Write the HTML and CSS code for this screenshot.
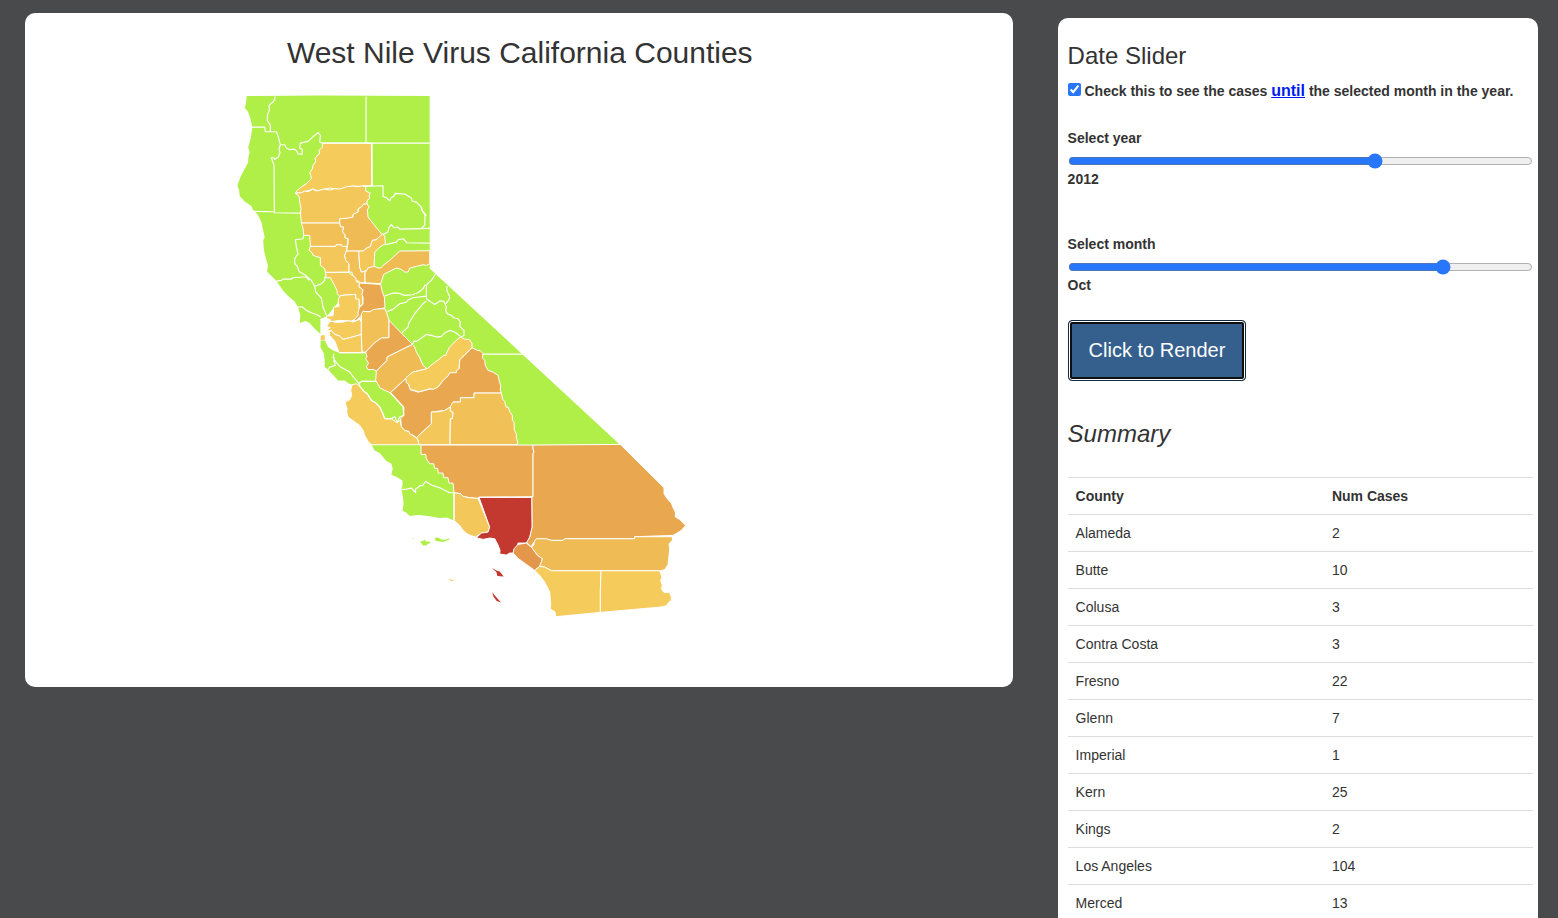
FILE: index.html
```html
<!DOCTYPE html>
<html lang="en">
<head>
<meta charset="utf-8">
<title>West Nile Virus California Counties</title>
<link rel="stylesheet" href="styles.css">
</head>
<body>
<main class="layout">
<section class="map-panel">
<h2 class="map-title">West Nile Virus California Counties</h2>
<svg class="map" viewBox="25.3 84.6 988 560" width="988" height="560" role="img" aria-label="California counties">
<path class="g0" d="M247 95.7L290 95.4L320 95.2L430 95.7V268L620 444L421 445H454.3V520L447 517.2L440 517.7L428.3 515.7L419 514.6L410 515.7L407 512.5L402.7 510L403.9 504L403.3 496.7L401.7 489.3L402.9 484L402.7 480L397 476.5L391.7 474.3L393 468L391.7 463.3L386.7 460.7L380 452.7L375 450L372.3 445L400 430L385 417L356 385L349.3 383.3L345 380H338.3L333 374L328.3 369L325 366.7V360L324.3 353.3L320.7 346.7L321 340H325.3L328.3 346.7L333.3 350L340 352.3L364 352V320L340 300L327 316L320.7 318.3V333.3L315 328.3L310 322.7L306 320.7L300 322.7L300.7 315L298.3 306.7L295 301L289 296L283.3 290L276.7 280.7L267.3 271L268.3 265L266 257L264.3 250L263.5 240L265 236.7L263 228L261.7 221.7L258 214L253.3 209.3L251.7 205.7L245 201L240 195.7L239.5 190L237.7 185L241 176L248.3 162.3L248.7 157L250 151.7L248.5 147L251 138L252.7 126.7L250.7 118.3L248.3 111L245 107.7L246.3 103Z"/>
<g transform="translate(230 85) scale(.33333)">
<path class="c1" d="M278 173H425L427 300L400 303L370 302L330 312L300 308L265 316L250 311L215 322L197 324L203 314L215 305L230 295L245 280L243 270L240 262L248 251L250 240L258 229L256 220L264 208L270 205L268 195L278 185Z"/>
<path class="c2" d="M197 324L215 322L225 317L235 319L250 311L257 316L265 316L283 311L300 314L315 310L330 311L350 304L370 302L385 304L400 301H408V317L422 323L418 330L420 340L412 345V355L401 357L395 365L385 370V380L370 388L368 398L330 400V413H215L212 383L214 370L210 350L208 332Z"/>
<path class="line" d="M136 33L135 42L130 50L118 60L119 75L113 90L113 105L122 120V138M66 125H105L107 139H140L146 155L152 178L148 190L151 202L146 215L135 222L133 217H125L133 240L134 382L215 383M152 178H165L170 188L180 193L192 191L200 195L205 205L217 207L218 192L210 188L212 173L235 168L252 152L265 142L272 150L270 170L278 173H600M409 33V173M427 173V300M70 378L134 379M400 303L460 301V333L470 337L480 346L485 336L492 333L497 324L525 326L545 338L548 347L560 350L575 365L580 380L590 392"/>
</g>
<g transform="translate(230 200) scale(.33333)">
<path class="c4" d="M412 10L418 20L413 28L415 50L432 72L455 100L460 105L445 112L440 118L428 120L422 138L411 143L400 152H350L355 130V115L345 112L346 103L338 95L342 80H333L330 68V55L350 54L370 50V42L385 35L387 25L395 20L401 12Z"/>
<path class="c3" d="M215 68H330L333 80H342L338 95L346 103L345 112L355 115L352 140L338 138L335 133H320L318 138H242L240 105H222L220 85Z"/>
<path class="c2" d="M242 138H318L320 133H335L338 138H352L350 152L345 165L348 180L358 190V215L287 216L285 205L272 195V172L250 165L248 158L238 150Z"/>
<path class="c3" d="M350 152H387L390 200L395 215L412 210L406 215V247H390L386 241L378 244V234L370 225L366 215H358V190L348 180L345 165Z"/>
<path class="c2" d="M387 152H400L411 143L422 138L428 120L440 118L445 112L460 100L465 108L467 130L450 140L435 155L433 200L415 205L412 210L395 215L390 200Z"/>
<path class="c4" d="M406 215L412 210L415 202L435 198L445 203L455 202L460 195L480 180L510 152L600 151V190L590 195L580 193L560 198L540 203L535 215H525L515 207L500 203L490 208L475 215L462 222L453 250L406 247Z"/>
<path class="c2" d="M287 216H358L366 225L370 225L378 234L380 244L390 247L388 260L400 268L398 280L400 310L390 318L388 298H378V282L345 284L330 287L322 280V270L316 258L302 232L290 232Z"/>
<path class="c1" d="M330 287L345 284L378 282V296H388V320L390 338L380 355L365 362L330 360L302 364V358L290 354V347L310 346L312 320L328 318L325 300Z"/>
<path class="c5" d="M390 248L453 252L458 275L464 290L466 322L440 328L430 335L400 333L395 345L380 360L370 362L385 345V335L390 320L400 312V290L397 282L400 268L388 258Z"/>
<path class="line" d="M575 20L576 30L586 40L585 75L576 82M600 84L510 86L505 80L493 82L485 73L478 80L475 94L460 103M600 128L532 127L520 115L505 118L500 125L467 133M222 104L220 115L197 118L200 140L205 160L195 175V190L203 198L208 213L225 223L245 240L255 258L275 250L285 240V230L290 232M140 242L155 240L160 236L185 236L190 232L228 229L238 240M255 258L258 275L275 293L280 320L290 345M205 320L217 319L230 330L245 337L262 343L273 350"/>
</g>
<g transform="translate(375 255) scale(.33333)">
<path class="line" d="M30 122L55 113H70L90 120L115 118L120 115L130 112L145 100L150 90L158 88L161 82L170 75L182 57M155 90V130M38 168L55 162L75 145L95 140L100 134L115 127L155 122M82 232L100 215L102 204L120 175L145 145L155 137"/>
</g>
<g transform="translate(290 300) scale(.33333)">
<path class="c1" d="M110 78L122 62L140 66L160 65L175 61L190 65L210 57L215 65V102L180 112L160 117L150 107L135 102L125 90L112 92L116 85L122 82Z"/>
<path class="c1" d="M118 95L125 90L135 102L150 107L160 117L180 112L215 102L217 157H148L140 135L135 122L120 105Z"/>
<path class="c1 isle" d="M93 105L105 104V119H93Z"/>
<path class="c3" d="M215 40L220 33L240 34L250 28L260 26L285 25L290 35L298 60V112L275 113L255 127L228 155H217L215 102Z"/>
<path class="c5" d="M298 60L368 132L292 170V180L260 212L250 207L235 208L230 198L236 190L235 185L228 175L232 168L228 155L255 127L275 113L298 112Z"/>
<path class="c4" d="M368 132L375 140L380 155L390 172L400 195L412 205L370 215L350 233L302 277L285 270L270 262L267 255L258 240L260 212L292 180V170Z"/>
<path class="c1" d="M187 253L200 250L212 260L225 275L233 280L245 300L258 307L270 320L285 355L305 355L320 366L333 360V375L345 390L358 393L365 403L380 412L385 418L388 433H245L235 423L225 405L220 390L210 375L200 368L175 350L171 335L172 325L166 305L180 298L186 285L183 270Z"/>
<path class="c5" d="M350 233L362 268L385 275L445 260L460 240L480 217L508 205L510 178L547 142L563 150L572 151L580 160L578 172L585 180L587 195L595 210L610 215L625 225L628 240L633 255L632 270L635 278H553V292H512V305H490L485 318L465 330L425 335V370L380 412L373 406L360 400L357 392L345 390L335 378L333 355L342 345L340 320L302 277Z"/>
<path class="c1" d="M412 205L430 190L450 175L462 165L468 165L478 142L495 124L512 110L525 116L540 118L547 130V142L525 163L510 178L508 205L500 211V217L480 217L475 227L460 240L445 260L430 267L420 265L400 271L385 275L378 270L362 268L357 252L350 247L348 233L360 222L370 215Z"/>
<path class="c2" d="M425 335L445 334L465 330L485 318L482 330L490 335L488 355H482L481 433H388L385 418L380 412L425 370Z"/>
<path class="c3" d="M635 278H553V292H512V305H490L482 318V333L490 335L488 355H482L481 433H683L684 425L680 413V400L674 390L673 365L668 360V345L661 335L655 320H649L645 303L639 297Z"/>
<path class="line" d="M368 132L373 122L380 123L392 115L410 102L425 105L440 110L455 108L465 98L480 90L495 95L512 108M150 157H228M133 160L130 170L137 183L150 198L180 215L195 235L208 250L215 243L225 242L258 243M115 207L120 200L137 195L133 183V170M208 250L212 260L225 275L233 280L245 300L258 307L270 320L278 335L285 355H305L315 348L323 366L330 350L342 345V320L302 277"/>
</g>
<g transform="translate(420 260) scale(.33333)">
<path class="line" d="M20 115L32 124L45 132L60 122L72 122L80 140L78 150L83 160L95 165L102 172L115 175L122 185L120 198L133 210V225L120 232M82 77L81 88L90 110L87 119L78 130M190 281H312"/>
</g>
<g transform="translate(360 430) scale(.33333)">
<path class="c5" d="M184 44H520V55L523 65L520 70V199L358 200L355 204L330 202L310 198L303 190L283 187L280 158H268L265 142H252L250 128H236L234 114H225L222 100H210L200 85L198 72H184Z"/>
<path class="c2" d="M283 187L303 190L310 198L330 202L355 204L390 290L385 305L365 308L347 320L325 312L310 300L300 285L283 270Z"/>
<path class="c5" d="M520 44L782 42L913 172V190L924 207L935 218L940 232L947 245V260L960 267L978 285L965 300L940 315L825 319V325H615L610 330H575L560 326H530L518 342L515 350L500 335L510 320L517 290L516 200L520 199V70L523 65L520 55Z"/>
<path class="red" d="M358 201H516L517 290L510 320L500 338H475L473 346L460 368L450 368L440 374L420 371L421 360L415 344L405 325L390 323L370 327L350 322L365 308L385 305L390 290Z"/>
<path class="c6" d="M475 342L500 338L520 355L533 374L548 385L546 397L540 408L525 420L500 402L475 384L460 368L463 355Z"/>
<path class="c4" d="M515 350L522 345L524 333L530 325H560L575 330H610L615 325H825V319H938V330L928 340L930 358L928 375L926 392L925 402L915 418L902 421H575L550 408H540L548 385L533 374Z"/>
<path class="c1" d="M525 420L540 408L555 410L575 421H724L722 478V546L588 559L586 545L572 535L573 520L570 485L555 455L540 435Z"/>
<path class="c1" d="M724 421H900L907 440L903 450L908 465L905 475L913 486H930L935 500V510L928 515L920 526L903 530L722 546V478Z"/>
<path class="line" d="M125 178L140 176L155 173L168 187L167 175L170 175L182 165L188 166L198 153L218 165L240 172L270 187L283 187V270"/>
<path class="isle g" d="M181 333L190 332L194 327L199 333L212 334L211 339L204 340L200 345H190L186 340ZM225 322L235 321L245 327L257 328L268 324L270 327L260 331L250 335L228 332ZM155 324L167 324L158 326Z"/>
<path class="isle r" d="M396 413L412 421L420 423L432 438L413 437L410 425ZM397 485L406 496L424 516L411 512L402 500Z"/>
<path class="isle o" d="M267 446L275 447L284 451L275 452Z"/>
</g>
</svg>
</section>
<aside class="side-panel">
<h3 class="side-title">Date Slider</h3>
<label class="check-row"><input class="check" type="checkbox" checked> Check this to see the cases <a class="until" href="#">until</a> the selected month in the year.</label>
<div class="slider-group">
<label class="label" for="year">Select year</label>
<input class="slider" id="year" type="range" min="2006" max="2015" value="2012">
<span class="label">2012</span>
</div>
<div class="slider-group">
<label class="label" for="month">Select month</label>
<input class="slider" id="month" type="range" min="1" max="12" value="10">
<span class="label">Oct</span>
</div>
<button class="render-btn" type="button">Click to Render</button>
<h3 class="summary">Summary</h3>
<table class="cases">
<thead><tr><th class="county">County</th><th>Num Cases</th></tr></thead>
<tbody>
<tr><td>Alameda</td><td>2</td></tr>
<tr><td>Butte</td><td>10</td></tr>
<tr><td>Colusa</td><td>3</td></tr>
<tr><td>Contra Costa</td><td>3</td></tr>
<tr><td>Fresno</td><td>22</td></tr>
<tr><td>Glenn</td><td>7</td></tr>
<tr><td>Imperial</td><td>1</td></tr>
<tr><td>Kern</td><td>25</td></tr>
<tr><td>Kings</td><td>2</td></tr>
<tr><td>Los Angeles</td><td>104</td></tr>
<tr><td>Merced</td><td>13</td></tr>
</tbody>
</table>
</aside>
</main>
</body>
</html>
```
FILE: styles.css
```css
* { box-sizing: border-box; }
body {
  margin: 0;
  height: 918px;
  overflow: hidden;
  background: #484a4b;
  color: #333;
  font: 14px/20px "Liberation Sans", Arial, sans-serif;
}
.layout {
  display: flex;
  align-items: flex-start;
  gap: 45px;
  height: 918px;
  padding: 13px 20px 0 25px;
}
.map-panel {
  width: 988px;
  height: 674px;
  border-radius: 10px;
  background: #fff;
}
.map-title {
  margin: 0;
  padding: 23px 0 0 1.5px;
  height: 72px;
  font-size: 30px;
  font-weight: 500;
  line-height: 33px;
  text-align: center;
}
.map { display: block; }
.map path { stroke: #fff; stroke-width: 3; stroke-linejoin: round; }
.map .g0 { fill: #b0ee48; stroke: none; }
.map .line { fill: none; stroke-width: 3.5; }
.c1 { fill: #f5cc5b; }
.c2 { fill: #f4c75a; }
.c3 { fill: #f1c157; }
.c4 { fill: #efbb55; }
.c5 { fill: #e9a74f; }
.c6 { fill: #e4974a; }
.red { fill: #c4392f; }
.map .isle { stroke: none; }
.g { fill: #b0ee48; }
.r { fill: #c4392f; }
.o { fill: #f4c75a; }
.side-panel {
  width: 480px;
  height: 905px;
  margin-top: 5px;
  padding: 25px 5px 0 9.6px;
  border-radius: 10px 10px 0 0;
  background: #fff;
  overflow: hidden;
}
.side-title {
  margin: 0 0 10px;
  font-size: 24px;
  font-weight: 500;
  line-height: 26px;
}
.check-row {
  display: block;
  height: 23px;
  margin-bottom: 26px;
  font-weight: 700;
  line-height: 23px;
  white-space: nowrap;
}
.check { width: 13px; height: 13px; margin: 0; accent-color: #2876f9; }
.until { color: #001cee; font-size: 16px; text-decoration: underline; }
.slider-group { height: 106px; }
.label { display: block; height: 20px; font-weight: 700; }
.slider {
  display: block;
  width: 100%;
  height: 16px;
  margin: 5px 0 0;
  accent-color: #2876f9;
}
.render-btn {
  display: block;
  height: 61px;
  margin-top: -20px;
  padding: 0 20px 2px;
  border: 1px solid #122b40;
  border-radius: 4px;
  background: #35608e;
  box-shadow: inset 0 0 0 1px #fff, inset 0 0 0 3px #101010;
  color: #fff;
  font: 20px/26px "Liberation Sans", Arial, sans-serif;
}
.summary {
  margin: 40px 0 30px;
  font-size: 24px;
  font-style: italic;
  font-weight: 500;
  line-height: 26px;
}
.cases { width: 100%; border-collapse: collapse; table-layout: fixed; }
.cases th, .cases td {
  padding: 8px;
  border-top: 1px solid #ddd;
  text-align: left;
}
.cases .county { width: 256.3px; }
```
